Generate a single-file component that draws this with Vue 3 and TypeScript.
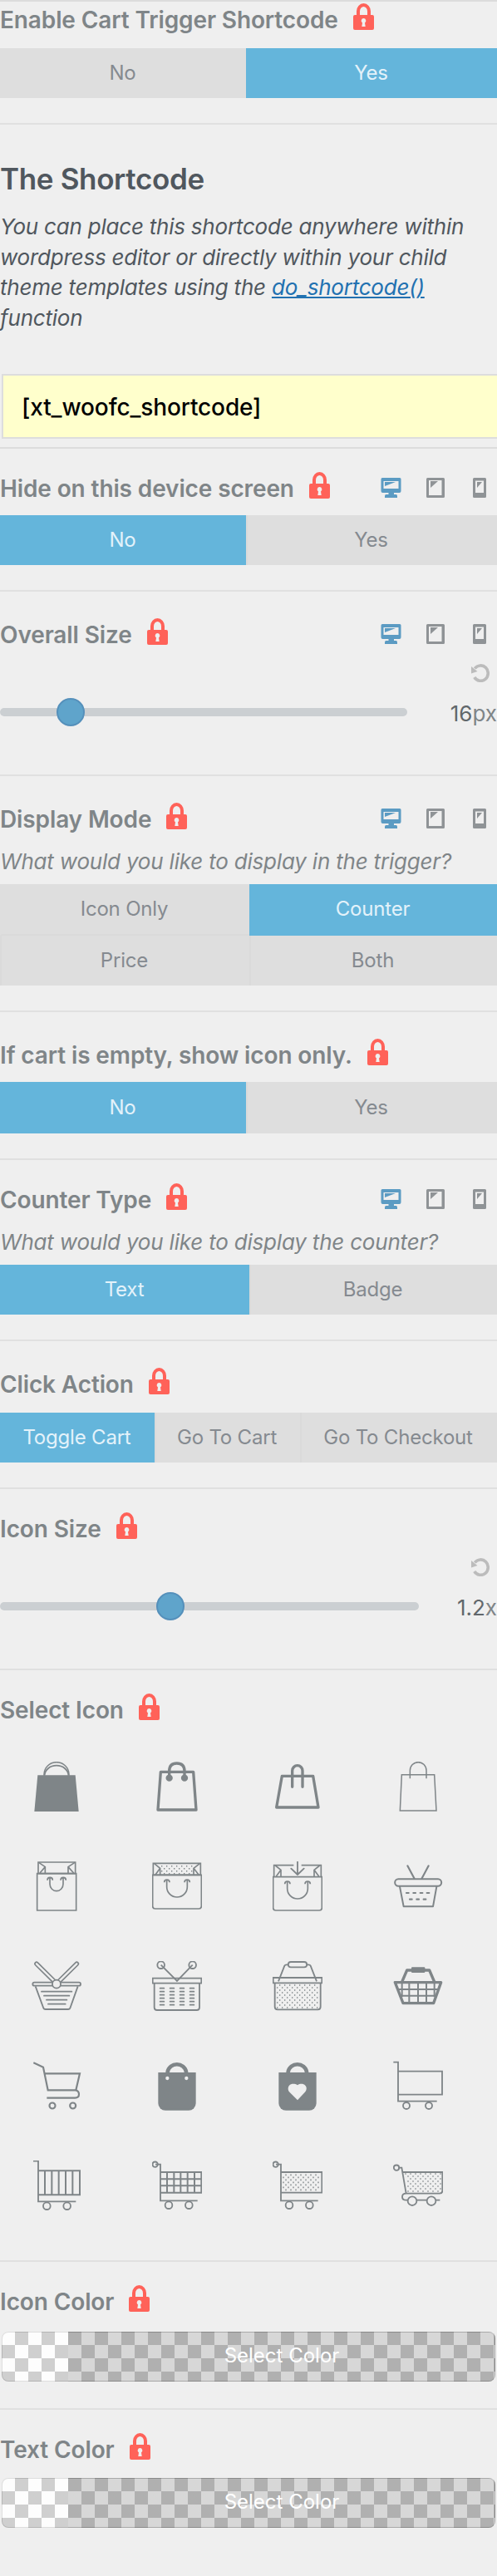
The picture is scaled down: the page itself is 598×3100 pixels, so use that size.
<script setup lang="ts">
import { ref } from 'vue'

interface Option {
  label: string
}

// Staggered dot field, returned as short horizontal dashes
function dots(x0: number, x1: number, y0: number, y1: number, first = 0, slant = 0): string {
  let d = ''
  let row = first
  for (let y = y0; y <= y1; y += 9, row++) {
    for (let x = x0 + (row % 2) * 9; x <= x1; x += 18) {
      if (x < x0 + (y - y0) * slant) continue
      d += `M${x - 2} ${y}h4`
    }
  }
  return d
}

function dashGrid(xs: number[], ys: number[], w: number): string {
  return ys.map((y) => xs.map((x) => `M${x} ${y}h${w}`).join('')).join('')
}

interface Shape {
  d: string
  w?: number
  fill?: 'ink' | 'paper'
  tone?: 'paper'
  round?: boolean
}

const circle = (x: number, y: number, r: number): string =>
  `M${x - r} ${y}a${r} ${r} 0 1 0 ${2 * r} 0a${r} ${r} 0 1 0 ${-2 * r} 0Z`

const bagBody = 'M22 42H158V153a26 26 0 0 1-26 26H48a26 26 0 0 1-26-26Z'
const bagHandle = 'M56 44V40a34 33 0 0 1 67 0V44'

const icons: Shape[][] = [
  [
    { d: 'M22 49H158L170 180H10Z', fill: 'ink', w: 0 },
    { d: 'M45 50V46A45 44 0 0 1 135 46V50', w: 4.5 },
    { d: 'M47 50A43 36 0 0 1 133 50', w: 5.5 },
  ],
  [
    { d: 'M31 37H149L159 174H21Z', w: 10, round: true },
    { d: 'M62 59V34C62 15 72 6 89 6S117 15 117 34V59', w: 10 },
    { d: circle(62, 59, 12.5) + circle(117, 59, 12.5), fill: 'ink', w: 0 },
  ],
  [
    { d: 'M34 52H146L165 165H14Z', w: 10, round: true },
    { d: 'M71 91V33a18.5 19 0 0 1 37 0V91', w: 10, round: true },
  ],
  [
    { d: 'M31 47H149L156 177H25Z', w: 4.5 },
    { d: 'M61 61V32a29.5 30 0 0 1 59 0V61', w: 4.5 },
  ],
  [
    { d: 'M20 44H161V177H20Z', w: 5 },
    { d: 'M24 3H158V44H24Z', w: 5 },
    { d: 'M26 4L49 20V44M49 20L30 42M156 4L132 20V44M132 20L152 42', w: 5 },
    { d: 'M66 60V82a24 25 0 0 0 48 0V60M57 68a9.5 10 0 0 1 19 0M105 68a9.5 10 0 0 1 19 0', w: 5 },
  ],
  [
    { d: 'M2 49H178V162a9 9 0 0 1-9 9H11a9 9 0 0 1-9-9Z', w: 5 },
    { d: 'M4 7H175V49H4Z', w: 5 },
    { d: 'M8 8L29 25V49M29 25L12 48M172 8L150 25V49M150 25L168 48', w: 5 },
    { d: dots(35, 146, 17, 46), w: 4.5 },
    { d: 'M53 68V92a37 37 0 0 0 74 0V68M44 76a9.5 10 0 0 1 19 0M117 76a9.5 10 0 0 1 19 0', w: 5 },
  ],
  [
    { d: 'M2 56H178V168a9 9 0 0 1-9 9H11a9 9 0 0 1-9-9Z', w: 5 },
    { d: 'M76 14H5V56M104 14H175V56', w: 5 },
    { d: 'M10 15L30 31V56M30 31L13 54M170 15L150 31V56M150 31L167 54', w: 5 },
    { d: 'M90 2V48M67 26L90 48L113 26', w: 5.5, round: true },
    { d: 'M53 74V98a37 37 0 0 0 74 0V74M44 82a9.5 10 0 0 1 19 0M117 82a9.5 10 0 0 1 19 0', w: 5 },
  ],
  [
    { d: 'M19 64H162a12.500 12.500 0 0 1 0 25H19a12.500 12.500 0 0 1 0-25Z', w: 6 },
    { d: 'M24 91L38 163H144L157 91', w: 6, round: true },
    { d: 'M52 16L76 61M128 16L104 61', w: 6.5, round: true },
    { d: 'M48 114h8M73 114h8M98 114h8M122 114h8M60 137h8M85 137h8M110 137h8', w: 6.5, round: true },
  ],
  [
    { d: 'M18 10L86 77M163 10L95 77', w: 17, round: true },
    { d: 'M18 10L86 77M163 10L95 77', w: 7, round: true, tone: 'paper' },
    { d: 'M10 77H171a6 6 0 0 1 0 12H10a6 6 0 0 1 0-12Z', w: 5.5, fill: 'paper' },
    { d: 'M14 91L42 167Q44 174 50 174H132Q138 174 140 167L167 91', w: 5.5 },
    { d: 'M36 110H145M45 125H136M54 140H127M60 155H122', w: 5.5, round: true },
    { d: circle(90, 83, 15), w: 5.5, fill: 'paper' },
  ],
  [
    { d: circle(32, 14, 13) + circle(146, 14, 13), w: 5.5 },
    { d: 'M32 14L90 72L146 14', w: 5.5 },
    { d: 'M2 62H178V80H2Z', w: 5.5 },
    { d: 'M8 80V167q0 10 10 10H161q10 0 10-10V80', w: 5.5 },
    { d: dashGrid([29, 65, 101, 137], [98, 110, 122, 134, 146, 158], 14), w: 5.5, round: true },
  ],
  [
    { d: 'M66 3H114a9.500 9.500 0 0 1 0 19H66a9.500 9.500 0 0 1 0-19Z', w: 5.5 },
    { d: 'M57 13H50Q45 13 43 17L21 73M123 13H130Q135 13 137 17L159 73', w: 5.5 },
    { d: 'M2 60H178V79H2Z', w: 5.5 },
    { d: 'M8 79V165q0 10 10 10H163q10 0 10-10V79', w: 5.5 },
    { d: dots(17, 166, 87, 170, 1), w: 5 },
  ],
  [
    { d: 'M7 77H173L146 152H36Z', w: 10, round: true },
    { d: 'M32 75L50 33H131L149 75', w: 10, round: true },
    { d: 'M69 22H112a3 3 0 0 1 3 3V39a3 3 0 0 1-3 3H69a3 3 0 0 1-3-3V25a3 3 0 0 1 3-3Z', w: 0, fill: 'ink' },
    { d: 'M32 77V130M58 77V151M90 77V151M120 77V151M149 77V130M18 102H162M26 125H154', w: 6 },
  ],
  [
    { d: 'M7 7L42 23L59 106H160L174 46H48', w: 6.5 },
    { d: 'M160 106q11 4 11 15q0 13-14 13H55', w: 6.5 },
    { d: circle(75, 162, 10.5) + circle(149, 162, 10.5), w: 6.5 },
  ],
  [
    { d: bagBody, w: 0, fill: 'ink' },
    { d: bagHandle, w: 14 },
    { d: circle(55, 63, 6.5) + circle(124, 63, 6.5), w: 0, fill: 'paper' },
  ],
  [
    { d: bagBody, w: 0, fill: 'ink' },
    { d: bagHandle, w: 14 },
    {
      d: 'M90 142L62 114C54 106 55 95 60 89C67 82 80 82 90 88C99 82 111 82 118 89C124 95 124 106 116 114Z',
      w: 0,
      fill: 'paper',
    },
  ],
  [
    { d: 'M1 5H18V146H158', w: 5.5 },
    { d: 'M18 38H177V122H18', w: 5.5 },
    { d: circle(48, 162, 12) + circle(129, 162, 12), w: 5.5 },
  ],
  [
    { d: 'M6 2H24V148H160', w: 5.5 },
    { d: 'M24 37H174V124H24M48 37V124M73 37V124M98 37V124M123 37V124M148 37V124', w: 6 },
    { d: circle(55, 164, 13) + circle(128, 164, 13), w: 5.5 },
  ],
  [
    { d: circle(11, 14, 9.5), w: 5.5 },
    { d: 'M12 14H30V145H164', w: 5.5 },
    { d: 'M30 42H178V116H30M54 42V116M79 42V116M103 42V116M128 42V116M153 42V116M30 67H178M30 91H178', w: 6 },
    { d: circle(60, 161, 13) + circle(133, 161, 13), w: 5.5 },
  ],
  [
    { d: circle(11, 14, 9.5), w: 5.5 },
    { d: 'M12 14H30V145H164', w: 5.5 },
    { d: 'M30 42H178V116H30', w: 5.5 },
    { d: dots(39, 171, 52, 108, 1), w: 5 },
    { d: circle(60, 161, 13) + circle(133, 161, 13), w: 5.5 },
  ],
  [
    { d: circle(12, 26, 9.5), w: 5.5 },
    { d: 'M20 26H31L47 119', w: 5.5 },
    { d: 'M34 42H178V109q0 10-10 10H47q-14 0-14 12t14 12H169', w: 5.5 },
    { d: dots(45, 173, 48, 112, 0, 0.12), w: 5 },
    { d: circle(69, 146, 16) + circle(138, 146, 16), w: 5.5, fill: 'paper' },
  ],
]

interface Section {
  title: string
  kind: 'choice' | 'slider' | 'icons' | 'color'
  variant?: string
  devices?: boolean
  note?: string
  options?: Option[]
  selected?: number
  value?: string
  unit?: string
  position?: number
}

const yesNo: Option[] = [{ label: 'No' }, { label: 'Yes' }]

const sections = ref<Section[]>([
  { title: 'Enable Cart Trigger Shortcode', kind: 'choice', variant: 'first', options: yesNo, selected: 1 },
  { title: 'Hide on this device screen', kind: 'choice', variant: 'snug', devices: true, options: yesNo, selected: 0 },
  { title: 'Overall Size', kind: 'slider', variant: 'wide-value', devices: true, value: '16', unit: 'px', position: 17.35 },
  {
    title: 'Display Mode',
    kind: 'choice',
    variant: 'pairs',
    devices: true,
    note: 'What would you like to display in the trigger?',
    options: [{ label: 'Icon Only' }, { label: 'Counter' }, { label: 'Price' }, { label: 'Both' }],
    selected: 1,
  },
  { title: 'If cart is empty, show icon only.', kind: 'choice', variant: 'tall', options: yesNo, selected: 0 },
  {
    title: 'Counter Type',
    kind: 'choice',
    variant: 'pairs snug',
    devices: true,
    note: 'What would you like to display the counter?',
    options: [{ label: 'Text' }, { label: 'Badge' }],
    selected: 0,
  },
  {
    title: 'Click Action',
    kind: 'choice',
    variant: 'triple',
    options: [{ label: 'Toggle Cart' }, { label: 'Go To Cart' }, { label: 'Go To Checkout' }],
    selected: 0,
  },
  { title: 'Icon Size', kind: 'slider', variant: 'snug', value: '1.2', unit: 'x', position: 40.7 },
  { title: 'Select Icon', kind: 'icons', variant: 'snug' },
  { title: 'Icon Color', kind: 'color', variant: 'snug' },
  { title: 'Text Color', kind: 'color', variant: 'snug last' },
])
</script>

<template>
  <main class="panel">
    <template v-for="(s, i) in sections" :key="s.title">
      <section class="section" :class="[s.kind, s.variant]">
        <header class="head">
          <h3 class="title">{{ s.title }}</h3>
          <svg class="lock" viewBox="0 0 25 32" width="25" height="32">
            <path d="M6 16V9.500a6.500 7.500 0 0 1 13 0V16" fill="none" stroke="#ff6259" stroke-width="4" />
            <rect y="14" width="25" height="18" rx="2" fill="#ff6259" />
            <path d="M12.500 18a3 3 0 0 1 1.500 5.500l.7 4.500h-4.400l.7-4.500a3 3 0 0 1 1.500-5.500Z" fill="#efefef" />
          </svg>
          <div v-if="s.devices" class="devices">
            <svg class="active" viewBox="0 0 25 24" width="25" height="24">
              <path
                fill-rule="evenodd"
                d="M2 0H23a1.500 1.500 0 0 1 1.500 1.500V16a2 2 0 0 1-2 2H16v2h2.500q1.500 0 1.500 2v2H5v-2q0-2 1.500-2H9.500V18H2.500a2 2 0 0 1-2-2V1.500A1.500 1.500 0 0 1 2 0ZM3.500 4V13H21.500V4Z"
              />
              <path d="M5 5H18L5 10Z" />
            </svg>
            <svg viewBox="0 0 22 24" width="22" height="24">
              <path fill-rule="evenodd" d="M1.500 0h19A1.500 1.500 0 0 1 22 1.500v21a1.500 1.500 0 0 1-1.500 1.500h-19A1.500 1.500 0 0 1 0 22.500v-21A1.500 1.500 0 0 1 1.500 0ZM3 3V21H18.500V3Z" />
              <path d="M5 4H14L5 12Z" />
            </svg>
            <svg viewBox="0 0 16 24" width="16" height="24">
              <path fill-rule="evenodd" d="M1.500 0h13A1.500 1.500 0 0 1 16 1.500v21a1.500 1.500 0 0 1-1.500 1.500h-13A1.500 1.500 0 0 1 0 22.500v-21A1.500 1.500 0 0 1 1.500 0ZM3 3.500V18H13V3.500Z" />
              <path d="M5 5H11L5 12Z" />
            </svg>
          </div>
        </header>

        <p v-if="s.note" class="note">{{ s.note }}</p>

        <div v-if="s.kind === 'choice'" class="choices">
          <button
            v-for="(o, n) in s.options"
            :key="o.label"
            class="choice-button"
            :class="{ on: n === s.selected }"
            @click="s.selected = n"
          >
            {{ o.label }}
          </button>
        </div>

        <div v-else-if="s.kind === 'slider'" class="slider-box">
          <svg class="reset" viewBox="0 0 22 22" width="22" height="22">
            <path d="M4.300 5.500A8.900 9.200 0 1 1 3.800 16" fill="none" stroke="#bcbcbc" stroke-width="3.600" />
            <path d="M0 3V11.500L7.500 9Z" fill="#bcbcbc" />
          </svg>
          <div class="slider-row">
            <div class="track">
              <i class="thumb" :style="{ left: s.position + '%' }"></i>
            </div>
            <span class="value">{{ s.value }}<span class="unit">{{ s.unit }}</span></span>
          </div>
        </div>

        <div v-else-if="s.kind === 'icons'" class="icon-grid">
          <svg v-for="(shapes, n) in icons" :key="n" viewBox="0 0 180 180" width="60" height="60">
            <path
              v-for="(p, k) in shapes"
              :key="k"
              :d="p.d"
              :class="['shape', p.fill && 'fill-' + p.fill, p.tone && 'line-paper', { round: p.round }]"
              :stroke-width="p.w"
            />
          </svg>
        </div>

        <div v-else class="swatch">
          <span class="swatch-label">Select Color</span>
        </div>
      </section>

      <section v-if="i === 0" class="section shortcode">
        <h2 class="heading">The Shortcode</h2>
        <p class="text">
          You can place this shortcode anywhere within<br />
          wordpress editor or directly within your child<br />
          theme templates using the <a class="link">do_shortcode()</a><br />
          function
        </p>
        <div class="code">[xt_woofc_shortcode]</div>
      </section>
    </template>
  </main>
</template>

<style>
body {
  background: #efefef;
  overflow-x: hidden;
}
</style>

<style scoped>
.panel {
  box-sizing: border-box;
  width: 598px;
  height: 3100px;
  overflow: hidden;
  border-top: 2px solid #dcdcdc;
  background: #efefef;
  font-family: Inter, 'Liberation Sans', sans-serif;
  color: #7f8588;
}
.section {
  box-sizing: border-box;
  padding: 28px 0 30px;
  border-bottom: 2px solid #e0e0e0;
}
.section.snug {
  padding-top: 24px;
}
.section.first {
  padding-top: 0;
  margin-top: -2px;
}
.section.last {
  border-bottom: 0;
}
.head {
  display: flex;
  align-items: center;
  height: 40px;
}
.title {
  margin: 0;
  padding-top: 9px;
  font-size: 28px;
  line-height: 33px;
  font-weight: 600;
  letter-spacing: -0.12px;
  white-space: nowrap;
}
.lock {
  margin-left: 18px;
}
.devices {
  display: flex;
  margin-left: auto;
  margin-right: 13px;
  padding-top: 6px;
  gap: 30px;
  fill: #8f9396;
}
.devices svg:last-child {
  margin-left: 4px;
}
.devices .active {
  fill: #5b9bc3;
}
.note {
  margin: 17px 0 0;
  height: 45px;
  font-size: 26px;
  line-height: 36px;
  font-style: italic;
  letter-spacing: -0.2px;
  white-space: nowrap;
}
.choices {
  display: grid;
  grid-template-columns: 296px 302px;
  margin-top: 16px;
}
.first .choices,
.triple .choices {
  margin-top: 18px;
}
.pairs .choices {
  grid-template-columns: 300px 298px;
  margin-top: 0;
}
.triple .choices {
  grid-template-columns: 186px 175px 237px;
}
.choice-button {
  box-sizing: border-box;
  height: 60px;
  padding: 0 3px 0 0;
  border: 0;
  border-left: 2px solid #dadada;
  background: #dedede;
  color: #858a90;
  font: 400 24px/60px Inter, 'Liberation Sans', sans-serif;
  letter-spacing: -0.2px;
  white-space: nowrap;
}
.choice-button:first-child {
  border-left-color: #dedede;
}
.choice-button.on {
  border-color: #64b5db;
  background: #64b5db;
  color: #e3f2fa;
}
.tall .choice-button {
  height: 62px;
}
.pairs .choice-button:nth-child(1):nth-last-child(4),
.pairs .choice-button:nth-child(2):nth-last-child(3) {
  height: 62px;
  border-bottom: 2px solid #dadada;
}
.pairs .choice-button.on:nth-child(2):nth-last-child(3) {
  border-bottom-color: #64b5db;
}
.slider-box {
  display: flex;
  flex-direction: column;
  height: 122px;
}
.reset {
  align-self: flex-end;
  margin: 19px 9px 0 0;
}
.slider-row {
  display: flex;
  align-items: center;
  justify-content: space-between;
  height: 34px;
  margin-top: 19px;
}
.track {
  position: relative;
  width: 504px;
  height: 10px;
  border-radius: 5px;
  background: #cbcfd2;
}
.wide-value .track {
  width: 490px;
}
.thumb {
  position: absolute;
  box-sizing: border-box;
  top: -12px;
  width: 34px;
  height: 34px;
  margin-left: -17px;
  border: 2px solid #5590bb;
  border-radius: 50%;
  background: #5fa4cb;
}
.value {
  padding-top: 3px;
  font-size: 26px;
  line-height: 34px;
  letter-spacing: 0;
  color: #61676b;
}
.unit {
  color: #7f8588;
}
.icon-grid {
  display: grid;
  grid-template-columns: repeat(4, 144.8px);
  grid-auto-rows: 120px;
  place-items: center;
  margin: 16px 0 0 -4px;
  height: 600px;
}
.icons {
  height: 712px;
}
.shape {
  fill: none;
  stroke: #7f8588;
}
.fill-ink {
  fill: #7f8588;
}
.fill-paper {
  fill: #efefef;
}
.line-paper {
  stroke: #efefef;
}
.round {
  stroke-linecap: round;
  stroke-linejoin: round;
}
.swatch {
  display: flex;
  box-sizing: border-box;
  width: 594px;
  height: 60px;
  margin: 20px 0 2px 2px;
  padding-left: 80px;
  border-radius: 8px;
  overflow: hidden;
  background: conic-gradient(#cfcfcf 25%, #fdfdfd 0 50%, #cfcfcf 0 75%, #fdfdfd 0) 0 0 / 32px 32px;
  box-shadow: inset 0 0 0 1px rgba(0, 0, 0, 0.12);
}
.last .swatch {
  margin-top: 18px;
}
.swatch-label {
  flex: 1;
  background: rgba(0, 0, 0, 0.15);
  box-shadow: inset 0 1px 0 rgba(0, 0, 0, 0.1), inset -1px -1px 0 rgba(0, 0, 0, 0.1);
  color: #fff;
  font-size: 24px;
  line-height: 58px;
  text-align: center;
}
.shortcode {
  height: 390px;
  padding: 43px 0 0;
  color: #50575e;
  border-color: #dcdcdc;
}
.heading {
  margin: 0;
  font-size: 35px;
  line-height: 44px;
  font-weight: 600;
  letter-spacing: -0.35px;
}
.text {
  margin: 18px 0 0;
  font-size: 26px;
  line-height: 36.6px;
  font-style: italic;
  letter-spacing: -0.22px;
  white-space: nowrap;
}
.link {
  color: #2271b1;
  text-decoration: underline;
}
.code {
  box-sizing: border-box;
  width: 620px;
  height: 78px;
  margin: 49px 0 0 2px;
  padding-left: 22px;
  border: 2px solid #ddd;
  background: #ffc;
  color: #000;
  font-size: 28px;
  line-height: 76px;
  font-weight: 500;
  letter-spacing: -0.12px;
}
</style>
